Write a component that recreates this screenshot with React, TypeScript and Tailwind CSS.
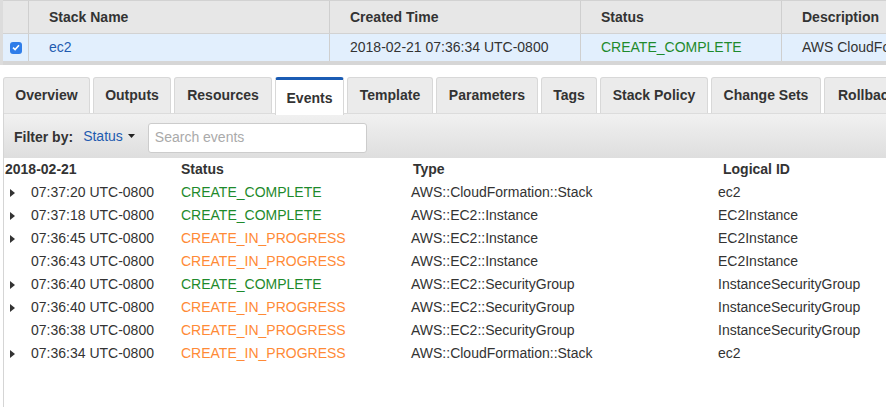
import React from "react";

const tabs = [
  { label: "Overview", w: "w-[87px]" },
  { label: "Outputs", w: "w-[78px]" },
  { label: "Resources", w: "w-[98px]" },
  { label: "Events", w: "w-[69px]", active: true },
  { label: "Template", w: "w-[86px]" },
  { label: "Parameters", w: "w-[102px]" },
  { label: "Tags", w: "w-[56px]" },
  { label: "Stack Policy", w: "w-[108px]" },
  { label: "Change Sets", w: "w-[110px]" },
  { label: "Rollback Triggers", w: "w-[150px]", left: true },
];

type EventRow = {
  time: string;
  status: "CREATE_COMPLETE" | "CREATE_IN_PROGRESS";
  type: string;
  logicalId: string;
  expandable: boolean;
};

const events: EventRow[] = [
  { time: "07:37:20 UTC-0800", status: "CREATE_COMPLETE", type: "AWS::CloudFormation::Stack", logicalId: "ec2", expandable: true },
  { time: "07:37:18 UTC-0800", status: "CREATE_COMPLETE", type: "AWS::EC2::Instance", logicalId: "EC2Instance", expandable: true },
  { time: "07:36:45 UTC-0800", status: "CREATE_IN_PROGRESS", type: "AWS::EC2::Instance", logicalId: "EC2Instance", expandable: true },
  { time: "07:36:43 UTC-0800", status: "CREATE_IN_PROGRESS", type: "AWS::EC2::Instance", logicalId: "EC2Instance", expandable: false },
  { time: "07:36:40 UTC-0800", status: "CREATE_COMPLETE", type: "AWS::EC2::SecurityGroup", logicalId: "InstanceSecurityGroup", expandable: true },
  { time: "07:36:40 UTC-0800", status: "CREATE_IN_PROGRESS", type: "AWS::EC2::SecurityGroup", logicalId: "InstanceSecurityGroup", expandable: true },
  { time: "07:36:38 UTC-0800", status: "CREATE_IN_PROGRESS", type: "AWS::EC2::SecurityGroup", logicalId: "InstanceSecurityGroup", expandable: false },
  { time: "07:36:34 UTC-0800", status: "CREATE_IN_PROGRESS", type: "AWS::CloudFormation::Stack", logicalId: "ec2", expandable: true },
];

function StatusText({ status }: { status: EventRow["status"] }) {
  return (
    <span
      className={
        status === "CREATE_COMPLETE" ? "text-[#1e8a2c]" : "text-[#ff8a36]"
      }
    >
      {status}
    </span>
  );
}

function StackTable() {
  const cell = "border-l border-[#cfcfcf] pl-[20px] flex items-center whitespace-nowrap overflow-hidden";
  return (
    <div className="border-l-[3px] border-[#dcdcdc]">
      <div className="grid grid-cols-[25px_301px_251px_201px_1fr] h-[34px] bg-[#e7e7e7] border-t border-b border-[#d2d2d2] font-bold">
        <div />
        <div className={cell}>Stack Name</div>
        <div className={cell}>Created Time</div>
        <div className={cell}>Status</div>
        <div className={cell}>Description</div>
      </div>
      <div className="grid grid-cols-[25px_301px_251px_201px_1fr] h-[27px] bg-[#e2effd]">
        <div className="flex items-center pl-[7px]">
          <span className="flex h-[12px] w-[12px] items-center justify-center rounded-[3px] bg-[#2f7de9]">
            <svg width="8" height="7" viewBox="0 0 8 7">
              <path d="M1 3.6 L3.1 5.6 L7 1.2" fill="none" stroke="white" strokeWidth="1.6" />
            </svg>
          </span>
        </div>
        <div className={`${cell} text-[#1e5bb0]`}>ec2</div>
        <div className={cell}>2018-02-21 07:36:34 UTC-0800</div>
        <div className={cell}>
          <StatusText status="CREATE_COMPLETE" />
        </div>
        <div className={cell}>AWS CloudFormation Sample Template EC2InstanceWithSecurityGroupSample</div>
      </div>
      <div className="h-[4px] bg-[#d6d6d6]" />
    </div>
  );
}

function Tabs() {
  return (
    <div className="relative z-10 mt-[12px] ml-[3px] flex h-[36px] items-start gap-[3px] overflow-visible whitespace-nowrap">
      {tabs.map((t) =>
        t.active ? (
          <div
            key={t.label}
            className={`${t.w} h-[38px] shrink-0 flex items-center justify-center pt-[2px] rounded-t-[3px] border border-b-0 border-t-[3px] border-[#d8d8d8] border-t-[#1b5cb4] bg-white font-bold`}
          >
            {t.label}
          </div>
        ) : (
          <div
            key={t.label}
            className={`${t.w} h-[36px] shrink-0 flex items-center ${t.left ? "pl-[13px]" : "justify-center"} rounded-t-[3px] border border-b-0 border-[#d8d8d8] bg-[#ebebeb] font-bold`}
          >
            {t.label}
          </div>
        )
      )}
    </div>
  );
}

function FilterBar() {
  return (
    <div className="flex h-[45px] items-center border-t border-[#dcdcdc] bg-gradient-to-b from-[#f1f1f1] to-[#dedede] pl-[10px] pt-[3px]">
      <span className="font-bold">Filter by:</span>
      <span className="ml-[10px] flex items-center text-[#1e5bb0] -mt-[3px]">
        Status
        <svg className="ml-[5px]" width="7" height="4" viewBox="0 0 7 4">
          <path d="M0 0 H7 L3.5 4 Z" fill="#222" />
        </svg>
      </span>
      <div className="ml-[13px] flex h-[30px] w-[219px] items-center rounded-[3px] border border-[#cccccc] bg-white pl-[6px] text-[#aaaaaa]">
        Search events
      </div>
    </div>
  );
}

function EventsTable() {
  const grid = "grid grid-cols-[177px_230px_307px_1fr] h-[23px] items-center whitespace-nowrap";
  return (
    <div>
      <div className={`${grid} font-bold`}>
        <div className="pl-[1px]">2018-02-21</div>
        <div>Status</div>
        <div className="pl-[2px]">Type</div>
        <div className="pl-[5px]">Logical ID</div>
      </div>
      {events.map((e, i) => (
        <div key={i} className={grid}>
          <div className="flex items-center">
            <span className="flex w-[27px] pl-[6px]">
              {e.expandable && (
                <svg width="5" height="8" viewBox="0 0 5 8">
                  <path d="M0 0 L5 4 L0 8 Z" fill="#333" />
                </svg>
              )}
            </span>
            {e.time}
          </div>
          <div>
            <StatusText status={e.status} />
          </div>
          <div>{e.type}</div>
          <div>{e.logicalId}</div>
        </div>
      ))}
    </div>
  );
}

export default function App() {
  return (
    <div className="h-[407px] w-[886px] overflow-hidden bg-white font-['Liberation_Sans',Arial,sans-serif] text-[14px] text-[#333]">
      <StackTable />
      <Tabs />
      <div className="ml-[3px] h-[300px] border-l border-[#d5d5d5]">
        <FilterBar />
        <EventsTable />
      </div>
    </div>
  );
}
